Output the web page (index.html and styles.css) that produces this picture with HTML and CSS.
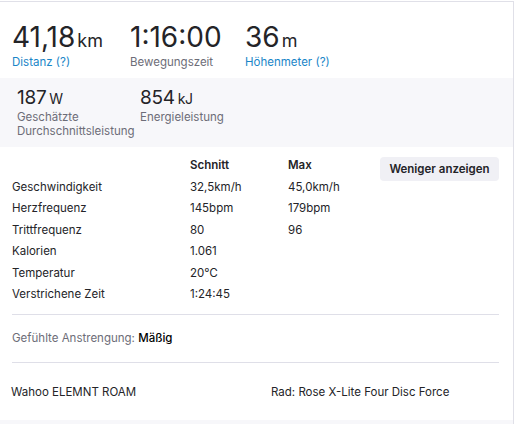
FILE: index.html
```html
<!DOCTYPE html>
<html lang="de">
<head>
    <meta charset="UTF-8">
    <title>Aktivität</title>
    <link rel="stylesheet" href="styles.css">
</head>
<body>
    <div class="activity-card">
        <!-- Hauptwerte -->
        <ul class="stats-primary">
            <li class="stat">
                <strong>41,18<abbr>km</abbr></strong>
                <span class="label link">Distanz (?)</span>
            </li>
            <li class="stat">
                <strong>1:16:00</strong>
                <span class="label">Bewegungszeit</span>
            </li>
            <li class="stat">
                <strong>36<abbr>m</abbr></strong>
                <span class="label link">Höhenmeter (?)</span>
            </li>
        </ul>

        <!-- Leistung -->
        <ul class="stats-secondary">
            <li class="stat">
                <strong>187<abbr>W</abbr></strong>
                <span class="label">Geschätzte<br>Durchschnittsleistung</span>
            </li>
            <li class="stat">
                <strong>854<abbr>kJ</abbr></strong>
                <span class="label">Energieleistung</span>
            </li>
        </ul>

        <!-- Detailtabelle -->
        <div class="details">
            <table class="details-table">
                <thead>
                    <tr><th></th><th>Schnitt</th><th>Max</th></tr>
                </thead>
                <tbody>
                    <tr><td>Geschwindigkeit</td><td>32,5km/h</td><td>45,0km/h</td></tr>
                    <tr><td>Herzfrequenz</td><td>145bpm</td><td>179bpm</td></tr>
                    <tr><td>Trittfrequenz</td><td>80</td><td>96</td></tr>
                    <tr><td>Kalorien</td><td>1.061</td><td></td></tr>
                    <tr><td>Temperatur</td><td>20℃</td><td></td></tr>
                    <tr><td>Verstrichene Zeit</td><td>1:24:45</td><td></td></tr>
                </tbody>
            </table>
            <button class="toggle-btn">Weniger anzeigen</button>
        </div>

        <div class="perceived">
            <span class="muted">Gefühlte Anstrengung:</span> <b>Mäßig</b>
        </div>

        <div class="gear">
            <span>Wahoo ELEMNT ROAM</span>
            <span>Rad: Rose X-Lite Four Disc Force</span>
        </div>

        <div class="card-footer"></div>
    </div>
</body>
</html>
```

FILE: styles.css
```css
body {
    margin: 0;
    background: #fff;
    font-family: Inter, "Noto Sans", sans-serif;
    color: #242428;
    font-size: 11.5px;
}
.activity-card {
    width: 513px;
    margin-top: 1px;
    border-top: 1px solid #e0e0e8;
    border-right: 1px solid #e0e0e8;
    background: #fff;
}
ul {
    list-style: none;
    margin: 0;
    padding: 0;
}
.stat {
    display: flex;
    flex-direction: column;
}
.stat abbr {
    text-decoration: none;
    margin-left: 3px;
}
.label {
    color: #6d6d78;
    font-size: 11.5px;
}
.link {
    color: #1a86c8; /* blaue Hilfelinks */
}

/* Hauptwerte oben */
.stats-primary {
    display: grid;
    grid-template-columns: 118px 115px auto;
    padding: 20px 12px 8px;
}
.stats-primary strong {
    font-weight: 400;
    font-size: 28px;
    line-height: 30px;
    height: 30px;
}
.stats-primary abbr {
    font-size: 18px;
    margin-left: 2px;
}
.stats-primary .label {
    line-height: 16px;
    margin-top: 2px;
}

/* grauer Leistungsbereich */
.stats-secondary {
    display: grid;
    grid-template-columns: 123px auto;
    background: #f7f7fa;
    padding: 8px 12px 9px 17px;
}
.stats-secondary strong {
    font-weight: 400;
    font-size: 19px;
    line-height: 24px;
    height: 24px;
    letter-spacing: -0.3px;
}
.stats-secondary abbr {
    font-size: 14px;
}
.stats-secondary .label {
    line-height: 14px;
}

/* Detailtabelle */
.details {
    display: flex;
    justify-content: space-between;
    align-items: flex-start;
    margin: 0 14px 0 12px;
    padding: 7.5px 0 9px;
    border-bottom: 1px solid #dfdfe8;
}
.details-table {
    border-collapse: collapse;
}
.details-table th,
.details-table td {
    padding: 0;
    height: 21.5px;
    text-align: left;
    vertical-align: middle;
}
.details-table th {
    font-weight: 600;
}
.details-table td:first-child,
.details-table th:first-child {
    width: 178px;
}
.details-table td:nth-child(2),
.details-table th:nth-child(2) {
    width: 98px;
}
.toggle-btn {
    margin-top: 2.5px;
    height: 24px;
    width: 119px;
    border: none;
    border-radius: 4px;
    background: #f0f0f5;
    color: #242428;
    font-family: inherit;
    font-size: 11.5px;
    font-weight: 600;
    padding: 0;
    cursor: pointer;
}

.perceived {
    margin: 0 14px 0 12px;
    padding: 15px 0 16px;
    line-height: 16px;
    border-bottom: 1px solid #dfdfe8;
}
.perceived b {
    font-weight: 500;
    color: #000;
}
.muted {
    color: #6d6d78;
}

.gear {
    display: grid;
    grid-template-columns: 260px auto;
    padding: 21px 14px 20px 11px;
    line-height: 16px;
}

.card-footer {
    height: 12px;
    background: #f7f7fa;
}
```
